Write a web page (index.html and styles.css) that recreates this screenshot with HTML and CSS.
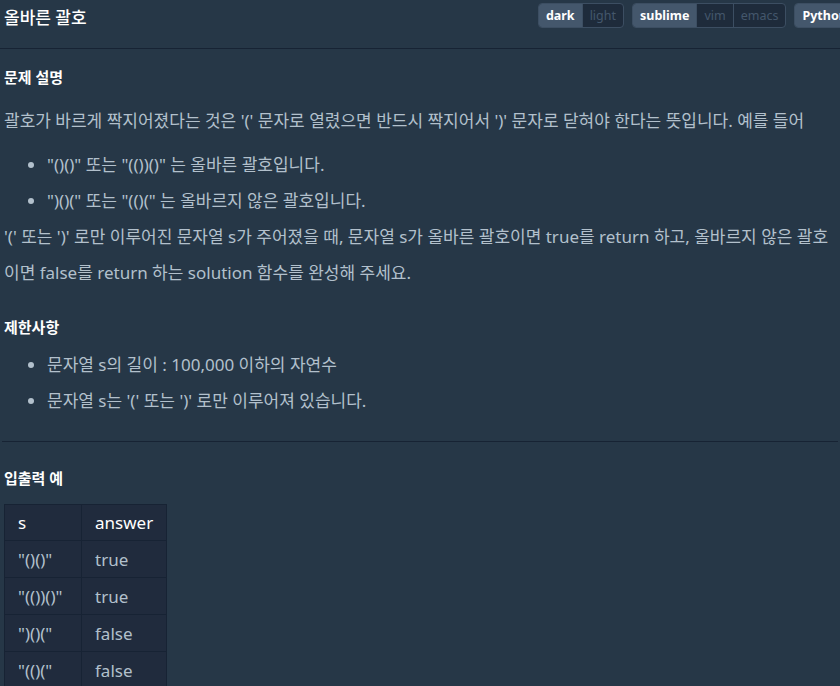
FILE: index.html
```html
<!DOCTYPE html>
<html>
<head>
<meta charset="utf-8">
<link rel="stylesheet" href="styles.css">
</head>
<body>

<div class="topbar">
	<div class="title">올바른 괄호</div>
	<div class="options">
		<div class="btn-group">
			<span class="opt active">dark</span><span class="opt">light</span>
		</div>
		<div class="btn-group">
			<span class="opt active">sublime</span><span class="opt">vim</span><span class="opt">emacs</span>
		</div>
		<div class="btn-group">
			<span class="opt active">Python3</span>
		</div>
	</div>
</div>

<div class="guide">
	<h5 class="first">문제 설명</h5>
	<p class="intro">괄호가 바르게 짝지어졌다는 것은 '(' 문자로 열렸으면 반드시 짝지어서 ')' 문자로 닫혀야 한다는 뜻입니다. 예를 들어</p>
	<ul class="list-a">
		<li>"()()" 또는 "(())()" 는 올바른 괄호입니다.</li>
		<li>")()(" 또는 "(()(" 는 올바르지 않은 괄호입니다.</li>
	</ul>
	<p>'(' 또는 ')' 로만 이루어진 문자열 s가 주어졌을 때, 문자열 s가 올바른 괄호이면 true를 return 하고, 올바르지 않은 괄호이면 false를 return 하는 solution 함수를 완성해 주세요.</p>

	<h5>제한사항</h5>
	<ul class="list-b">
		<li>문자열 s의 길이 : 100,000 이하의 자연수</li>
		<li>문자열 s는 '(' 또는 ')' 로만 이루어져 있습니다.</li>
	</ul>

	<hr>

	<h5>입출력 예</h5>
	<table class="examples">
		<tr><th class="col-s">s</th><th>answer</th></tr>
		<tr><td>"()()"</td><td>true</td></tr>
		<tr><td>"(())()"</td><td>true</td></tr>
		<tr><td>")()("</td><td>false</td></tr>
		<tr><td>"(()("</td><td>false</td></tr>
	</table>
</div>

</body>
</html>
```

FILE: styles.css
```css
body {
	margin:0;
	background-color:#263747;
	color:#b2c0cc;
	font-family:"Noto Sans", "Noto Sans CJK KR", sans-serif;
	overflow:hidden;
}
.topbar {
	height:48px;
	border-bottom:1px solid #172334;
	display:flex;
	justify-content:space-between;
	padding-left:4px;
}
.title {
	color:#fff;
	font-size:17px;
	line-height:36px;
	font-weight:500;
}
.options {
	display:flex;
	align-items:flex-start;
	gap:8px;
	padding-top:3px;
	margin-right:-22px;
}
.btn-group {
	display:flex;
	border:1px solid #3c4e62;
	border-radius:4px;
	overflow:hidden;
	background-color:#1e2b3b;
}
.opt {
	font-size:12.5px;
	line-height:23px;
	padding:0 7px;
	color:#44576c;
	border-left:1px solid #3c4e62;
}
.opt:first-child {
	border-left:none;
}
.opt.active {
	background-color:#44576c;
	color:#fff;
	font-weight:bold;
}
.guide {
	padding:18px 4px 0 4px;
}
h5 {
	color:#fff;
	font-size:15px;
	line-height:20px;
	font-weight:bold;
	margin:26px 0 0 0;
}
h5.first {
	margin-top:0;
}
p {
	font-size:17px;
	line-height:36px;
	margin:0;
}
p.intro {
	margin:16px 0 8px 0;
}
ul {
	font-size:17px;
	line-height:36px;
	margin:0;
	padding-left:43px;
}
ul.list-b {
	margin-top:10px;
}
hr {
	border:none;
	border-top:1px solid #172334;
	margin:22px -2px 0 -2px;
}
table.examples {
	margin-top:16px;
	border-collapse:collapse;
	background-color:#202b3d;
	font-size:17px;
}
table.examples th, table.examples td {
	border:1px solid #172334;
	height:36px;
	padding:0 13px;
	text-align:left;
}
table.examples th {
	color:#fff;
	font-weight:normal;
	height:35px;
}
table.examples th.col-s {
	width:50px;
}
```
